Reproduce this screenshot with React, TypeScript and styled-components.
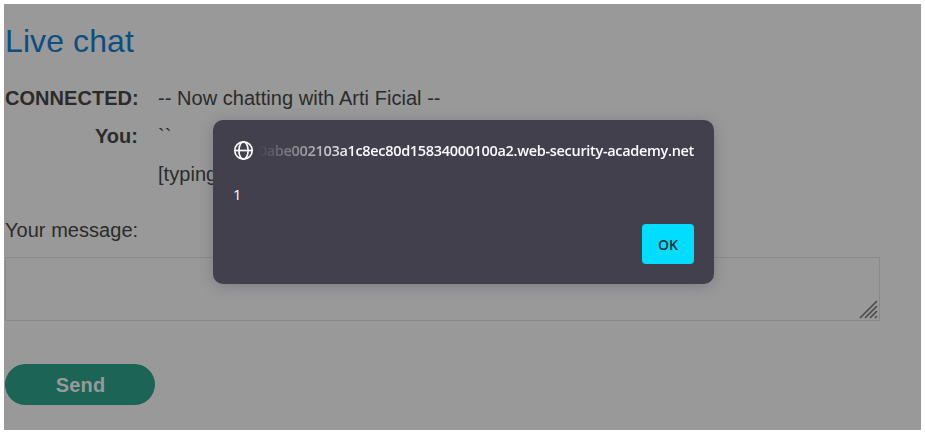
import React from "react";
import styled, { createGlobalStyle } from "styled-components";

const GlobalStyle = createGlobalStyle`
  * { box-sizing: border-box; }
  html, body { margin: 0; background: #fff; }
  body { font-family: "Liberation Sans", Arial, sans-serif; overflow: hidden; }
`;

const Page = styled.main`
  position: relative;
  width: 917px;
  height: 426px;
  margin: 4px;
  padding: 17px 41px 0 1px;
  overflow: hidden;
  background: #99999a;
  color: #2b2b2b;
  font-size: 20px;
`;

const Title = styled.h1`
  margin: 0;
  height: 40px;
  line-height: 40px;
  font-size: 32px;
  font-weight: 400;
  letter-spacing: 0.1px;
  color: #0d4e80;
`;

const Messages = styled.div`
  display: grid;
  grid-template-columns: 133px 1fr;
  grid-auto-rows: 38px;
  column-gap: 20px;
  margin-top: 18px;
  line-height: 38px;
  letter-spacing: 0.04px;
  white-space: nowrap;
`;

const Sender = styled.strong`
  text-align: right;
`;

const Label = styled.label`
  display: block;
  height: 38px;
  margin-top: 18px;
  line-height: 38px;
  letter-spacing: 0.04px;
`;

const MessageBox = styled.div`
  display: flex;
  align-items: flex-end;
  justify-content: flex-end;
  height: 64px;
  margin-top: 8px;
  border: 1px solid #89898a;
`;

const Grip = styled.svg`
  display: block;
  width: 19px;
  height: 19px;
  margin: 0 1px 1px 0;
`;

const SendButton = styled.button`
  display: block;
  width: 150px;
  height: 41px;
  margin-top: 43px;
  padding: 1px 0 0 1px;
  border: 0;
  border-radius: 21px;
  background: #1b6456;
  color: #99999a;
  font: bold 20px/40px "Liberation Sans", Arial, sans-serif;
  letter-spacing: 0.2px;
`;

const Dialog = styled.section`
  position: absolute;
  left: 209px;
  top: 116px;
  display: flex;
  flex-direction: column;
  width: 501px;
  height: 164px;
  padding: 20px;
  border-radius: 10px;
  background: #43404d;
  box-shadow: 0 2px 14px rgba(58, 57, 68, 0.3);
  color: #fbfbfe;
  font-family: "Segoe UI", "Open Sans", sans-serif;
  font-size: 15px;
`;

const Origin = styled.header`
  display: flex;
  align-items: center;
  gap: 4px;
  height: 21px;
`;

const Globe = styled.svg`
  flex: none;
  width: 21px;
  height: 21px;
`;

const Host = styled.span`
  display: flex;
  flex: 1;
  justify-content: flex-end;
  overflow: hidden;
  line-height: 21px;
  font-weight: 600;
  font-size: 14.5px;
  letter-spacing: -0.32px;
  white-space: nowrap;
  mask-image: linear-gradient(to right, transparent, #000 96px);
`;

const Body = styled.p`
  margin: 23px 0 0;
  height: 20px;
  line-height: 20px;
`;

const OkButton = styled.button`
  align-self: flex-end;
  width: 52px;
  height: 40px;
  margin-top: 20px;
  padding: 1px 0 0;
  border: 0;
  border-radius: 4px;
  background: #00ddff;
  color: #2b2a33;
  font: 600 14px/39px "Segoe UI", "Open Sans", sans-serif;
`;

export default function App() {
  return (
    <>
      <GlobalStyle />
      <Page>
        <Title>Live chat</Title>
        <Messages>
          <Sender>CONNECTED:</Sender>
          <span>-- Now chatting with Arti Ficial --</span>
          <Sender>You:</Sender>
          <span>``</span>
          <span />
          <span>[typing...]</span>
        </Messages>
        <Label>Your message:</Label>
        <MessageBox>
          <Grip viewBox="0 0 19 19" stroke="#4b4b4e" strokeWidth="1.7">
            <path d="M1 18 18 1M6 18 18 6M11 18 18 11M16 18l2-2" />
          </Grip>
        </MessageBox>
        <SendButton>Send</SendButton>
        <Dialog role="alertdialog">
          <Origin>
            <Globe viewBox="0 0 21 21" fill="none" stroke="#fbfbfe" strokeWidth="1.7">
              <circle cx="10.5" cy="10.5" r="8.7" />
              <ellipse cx="10.5" cy="10.5" rx="4.6" ry="8.7" />
              <path d="M1.8 10.5h17.4" />
            </Globe>
            <Host>0abe002103a1c8ec80d15834000100a2.web-security-academy.net</Host>
          </Origin>
          <Body>1</Body>
          <OkButton>OK</OkButton>
        </Dialog>
      </Page>
    </>
  );
}
